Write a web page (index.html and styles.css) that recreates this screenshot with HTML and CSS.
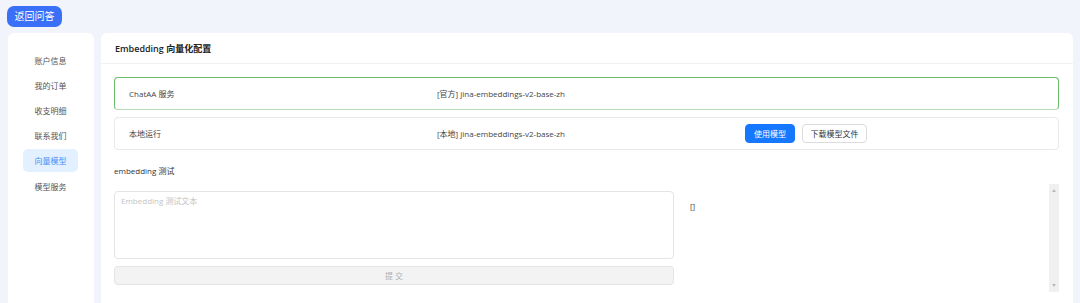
FILE: index.html
```html
<!DOCTYPE html>
<html lang="zh-CN">
<head>
<meta charset="UTF-8" />
<title>Embedding 向量化配置</title>
<link rel="stylesheet" href="styles.css">
</head>
<body>

<div class="top">
  <button class="back-btn">返回问答</button>
</div>

<div class="layout">
  <aside class="sidebar">
    <div class="menu-item">账户信息</div>
    <div class="menu-item">我的订单</div>
    <div class="menu-item">收支明细</div>
    <div class="menu-item">联系我们</div>
    <div class="menu-item active">向量模型</div>
    <div class="menu-item">模型服务</div>
  </aside>

  <main class="card">
    <div class="card-header">Embedding 向量化配置</div>
    <div class="card-body">
      <div class="model-row selected">
        <div>ChatAA 服务</div>
        <div>[官方] jina-embeddings-v2-base-zh</div>
        <div></div>
      </div>
      <div class="model-row">
        <div>本地运行</div>
        <div>[本地] jina-embeddings-v2-base-zh</div>
        <div class="actions">
          <button class="btn primary">使用模型</button>
          <button class="btn">下载模型文件</button>
        </div>
      </div>

      <div class="test-label">embedding 测试</div>

      <div class="test-area">
        <div class="test-left">
          <textarea placeholder="Embedding 测试文本"></textarea>
          <button class="submit-btn" disabled>提 交</button>
        </div>
        <div class="result">
          <div class="result-text">[]</div>
          <div class="scrollbar">
            <span class="arrow up"></span>
            <span class="arrow down"></span>
          </div>
        </div>
      </div>
    </div>
  </main>
</div>

</body>
</html>
```

FILE: styles.css
```css
* {
  box-sizing: border-box;
}
body {
  margin: 0;
  height: 303px;
  overflow: hidden;
  font-family: "Open Sans", "Noto Sans CJK SC", sans-serif;
  font-size: 8px;
  color: #333;
  background: #f1f4fb;
}
button {
  font-family: inherit;
}
.top {
  padding: 6px 0 0 7px;
}
.back-btn {
  display: block;
  height: 21px;
  width: 55px;
  padding: 0;
  border: none;
  border-radius: 7px;
  background: #3a6ff7;
  color: #fff;
  font-size: 10px;
  line-height: 21px;
}
.layout {
  display: flex;
  gap: 7px;
  margin: 6px 7px 0 8px;
}
.sidebar {
  width: 86px;
  height: 290px;
  background: #fff;
  border-radius: 6px;
  padding-top: 16px;
  display: flex;
  flex-direction: column;
  align-items: center;
  gap: 2px;
}
.menu-item {
  width: 55px;
  height: 23px;
  line-height: 23px;
  text-align: center;
  color: #555;
  font-size: 8px;
  border-radius: 5px;
  margin-left: -1px;
}
.menu-item:last-child {
  margin-top: 1px;
}
.menu-item.active {
  background: #e3f0ff;
  color: #4c8ef7;
}
.card {
  flex: 1;
  height: 290px;
  background: #fff;
  border-radius: 6px;
}
.card-header {
  height: 31px;
  line-height: 31px;
  padding-left: 14px;
  font-size: 9px;
  font-weight: 600;
  color: #222;
  border-bottom: 1px solid #f2f2f2;
}
.card-body {
  padding: 13px 14px 0 13px;
}
.model-row {
  display: grid;
  grid-template-columns: 308px 308px 1fr;
  align-items: center;
  height: 33px;
  padding-left: 14px;
  border: 1px solid #e8e8e8;
  border-radius: 4px;
  margin-bottom: 7px;
  font-size: 8px;
  color: #444;
}
.model-row.selected {
  border-color: #6bbd6b;
  border-bottom-color: #b5dcb5;
}
.actions {
  display: flex;
  gap: 7px;
}
.btn {
  height: 19px;
  width: 65px;
  padding: 0;
  border: 1px solid #dcdcdc;
  border-radius: 4px;
  background: #fff;
  color: #333;
  font-size: 8px;
  line-height: 17px;
}
.btn.primary {
  width: 50px;
  border-color: #1677ff;
  background: #1677ff;
  color: #fff;
}
.test-label {
  margin-top: 14px;
  font-size: 8px;
  color: #333;
  line-height: 14px;
}
.test-area {
  display: flex;
  margin-top: 6px;
}
.test-left {
  width: 560px;
  padding-top: 7px;
  display: flex;
  flex-direction: column;
  gap: 7px;
}
textarea {
  height: 68px;
  resize: none;
  border: 1px solid #e4e4e4;
  border-radius: 4px;
  padding: 3px 6px;
  font-family: inherit;
  font-size: 8px;
  outline: none;
}
textarea::placeholder {
  color: #c4c4c4;
}
.submit-btn {
  height: 19px;
  border: 1px solid #e4e4e4;
  border-radius: 4px;
  background: #f3f3f3;
  color: #b0b0b0;
  font-size: 8px;
}
.result {
  flex: 1;
  display: flex;
  justify-content: space-between;
  height: 108px;
  padding-left: 16px;
}
.result-text {
  margin-top: 16px;
  font-size: 8px;
  color: #444;
}
.scrollbar {
  position: relative;
  width: 10px;
  height: 108px;
  background: #f0f0f0;
}
.arrow {
  position: absolute;
  left: 3px;
  border-left: 2px solid transparent;
  border-right: 2px solid transparent;
}
.arrow.up {
  top: 5px;
  border-bottom: 3px solid #bbb;
}
.arrow.down {
  bottom: 5px;
  border-top: 3px solid #bbb;
}
```
